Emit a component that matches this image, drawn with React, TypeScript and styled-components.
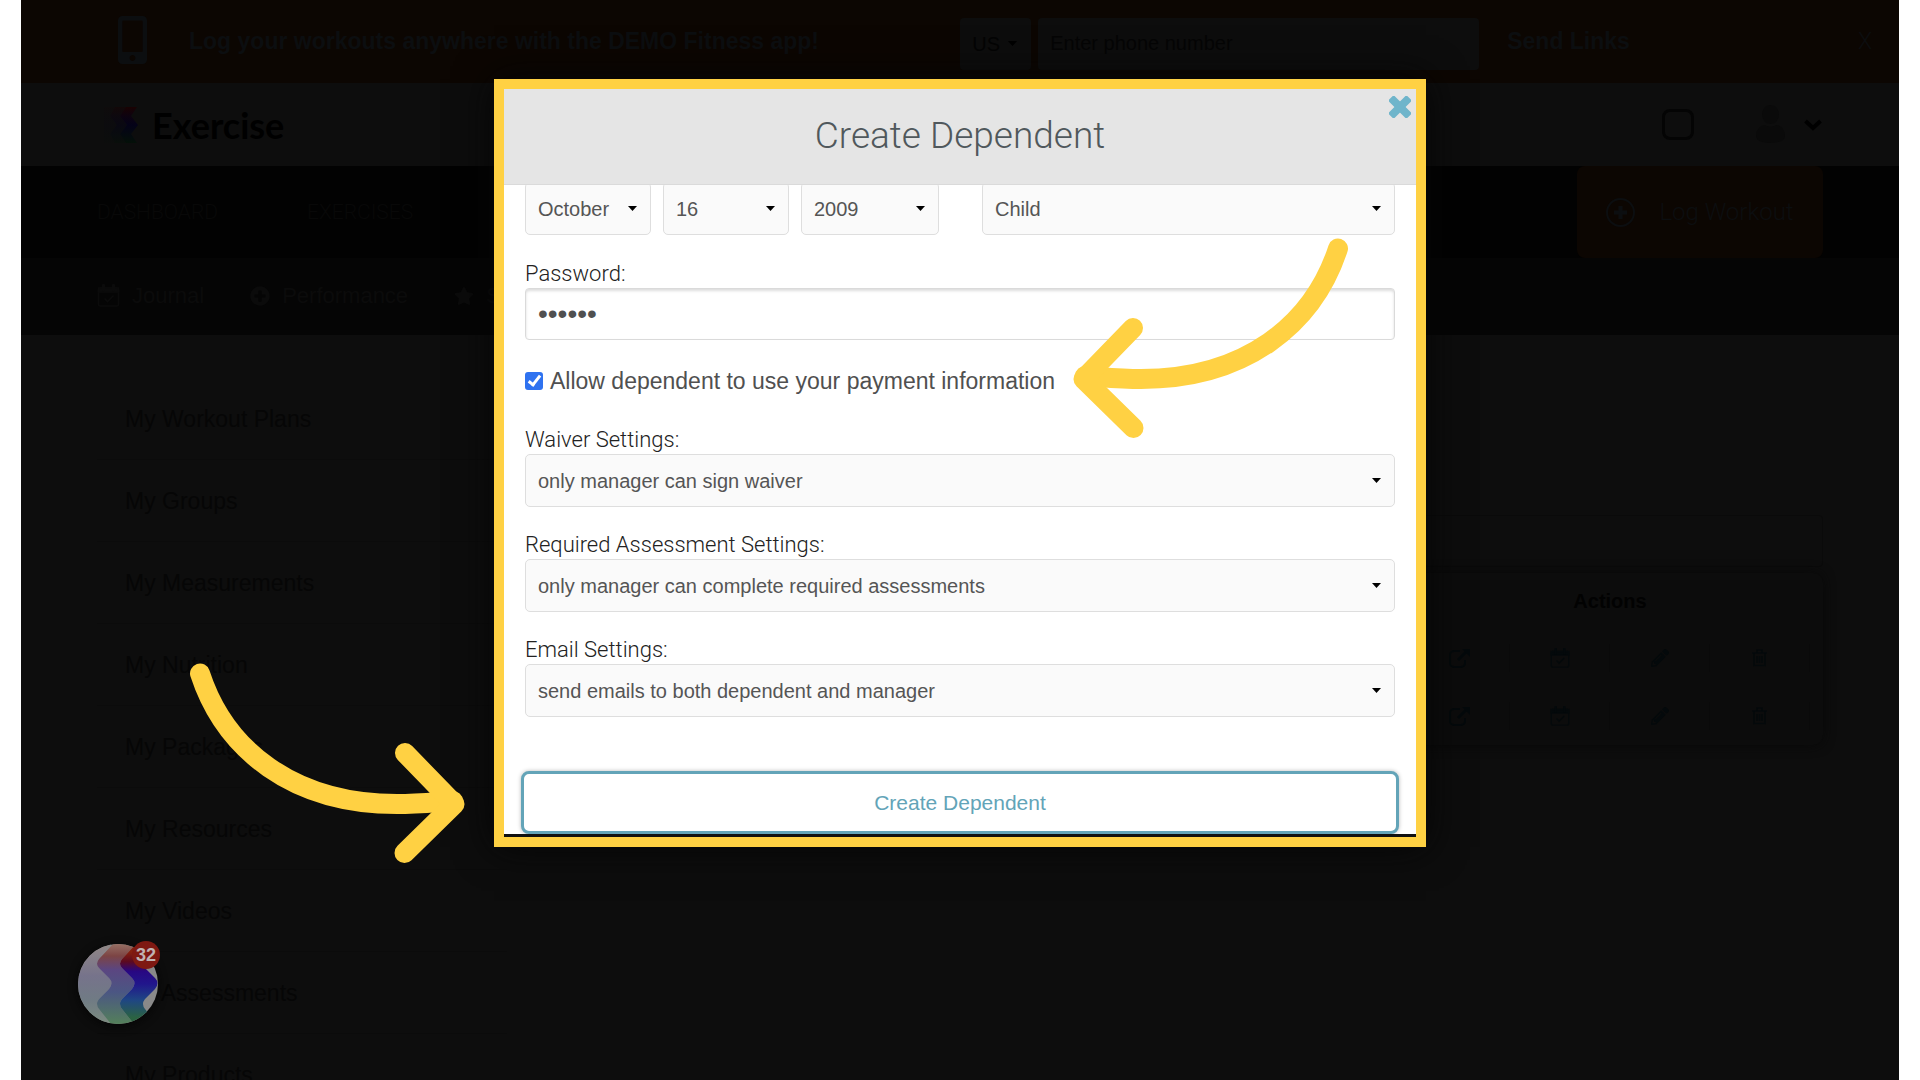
import React, { useId } from "react";
import styled, { createGlobalStyle } from "styled-components";
import { FaMobileAlt, FaPlusCircle, FaStar, FaPencilAlt } from "react-icons/fa";

const sans = `"Liberation Sans", Arial, sans-serif`;
const light = `Roboto, "Liberation Sans", sans-serif`;

const GlobalStyle = createGlobalStyle`
  *, *::before, *::after { box-sizing: border-box; }
  body { margin: 0; background: #fff; font-family: ${sans}; }
  button, input, select { font: inherit; color: inherit; margin: 0; }
  a { color: inherit; text-decoration: none; }
`;

const Frame = styled.div`
  position: relative;
  margin: 0 21px;
  height: 100vh;
  overflow: hidden;
  background: #0d0d0d;
  color: #050505;
`;

/* ---------- page behind the dialog ---------- */

const Promo = styled.div`
  display: flex;
  align-items: center;
  height: 83px;
  padding: 0 27px 0 97px;
  background: #0c0602;
  color: #0c0e10;
`;
const PromoIcon = styled.span`
  display: flex;
  width: 71px;
  padding-bottom: 4px;
  font-size: 48px;
  svg { width: 29px; }
`;
const PromoText = styled.strong`
  flex: 1;
  font-size: 23px;
`;
const PromoForm = styled.form`
  display: flex;
  gap: 7px;
  margin-right: 28px;
  padding-top: 4px;
`;
const CountryBox = styled.span`
  position: relative;
  display: block;
  width: 71px;
`;
const CountrySelect = styled.select`
  appearance: none;
  width: 100%;
  height: 52px;
  padding: 0 12px;
  border: 0;
  border-radius: 4px;
  background: #0d0d0d;
  color: #040404;
  font-size: 20px;
`;
const PhoneInput = styled.input`
  width: 441px;
  height: 52px;
  padding: 0 12px;
  border: 0;
  border-radius: 4px;
  background: #0d0d0d;
  font-size: 20px;
  &::placeholder { color: #050505; opacity: 1; }
`;
const PlainButton = styled.button<{ $bold?: boolean }>`
  padding: 0;
  border: 0;
  background: none;
  color: inherit;
  font-size: 23px;
  font-weight: ${(p) => (p.$bold ? 700 : 400)};
`;
const PromoClose = styled(PlainButton)`
  margin-left: 228px;
  font-family: ${light};
  font-weight: 300;
`;

const Masthead = styled.header`
  display: flex;
  align-items: center;
  justify-content: space-between;
  height: 83px;
  padding: 0 77px 0 81px;
`;
const Brand = styled.a`
  display: flex;
  align-items: center;
  gap: 14px;
  color: #000;
  font: 700 36px/40px Lato, ${sans};
`;
const AccountArea = styled.div`
  display: flex;
  align-items: center;
`;
const SquareButton = styled.button`
  width: 32px;
  height: 31px;
  padding: 0;
  border: 3px solid #040404;
  border-radius: 8px;
  background: none;
`;
const AccountButton = styled.button`
  display: flex;
  align-items: center;
  gap: 18px;
  margin-left: 61px;
  padding: 0;
  border: 0;
  background: none;
`;

const MainNav = styled.nav`
  display: flex;
  align-items: center;
  height: 92px;
  padding: 0 76px;
  background: #020202;
  color: #080808;
  font: 300 21px/28px ${light};
`;
const MainLink = styled.a`
  width: 210px;
`;
const LogWorkout = styled.button`
  display: flex;
  align-items: center;
  justify-content: center;
  gap: 24px;
  width: 246px;
  height: 92px;
  margin-left: auto;
  border: 0;
  border-radius: 8px;
  background: #0c0602;
  color: #0c0e10;
  font-size: 24px;
  font-weight: 300;
`;
const SubNav = styled.nav`
  display: flex;
  align-items: center;
  gap: 46px;
  height: 77px;
  padding: 0 76px 2px;
  background: #050505;
  color: #0b0b0b;
  font-size: 22px;
`;
const SubLink = styled.a`
  display: flex;
  align-items: center;
  gap: 12px;
`;

const Content = styled.div`
  display: flex;
  gap: 30px;
  padding: 43px 76px 0;
`;
const SideMenu = styled.ul`
  flex: 0 0 410px;
  margin: 0;
  padding: 0;
  list-style: none;
`;
const SideItem = styled.li`
  height: 82px;
  padding-left: 28px;
  border-bottom: 1px solid #0b0b0b;
  color: #060606;
  font-size: 23px;
  line-height: 82px;
`;
const Main = styled.main`
  flex: 1;
  padding-top: 137px;
`;
const SearchInput = styled.input`
  display: block;
  width: 100%;
  height: 52px;
  margin-bottom: 6px;
  border: 1px solid #0a0a0a;
  border-radius: 4px;
  background: #0d0d0d;
`;
const GridCard = styled.div`
  padding-right: 13px;
  border-radius: 10px;
  background: #0c0c0c;
  box-shadow: 0 0 12px #080808;
`;
const Grid = styled.table`
  width: 100%;
  border-collapse: collapse;
  th { height: 56px; color: #020202; font-size: 20px; }
  td { height: 58px; padding: 0; }
`;
const ActionCell = styled.td`
  width: 100px;
`;
const ActionButton = styled.button`
  display: flex;
  align-items: center;
  justify-content: center;
  width: 100%;
  height: 28px;
  padding: 0;
  border: 0;
  border-right: 1px solid #0a0a0a;
  background: none;
  color: #04090b;
  font-size: 18px;
`;

/* ---------- dialog ---------- */

const Overlay = styled.div`
  position: absolute;
  inset: 0;
  display: flex;
  align-items: flex-start;
  justify-content: center;
  padding-top: 79px;
`;
const Dialog = styled.section`
  position: relative;
  width: 932px;
  border: 10px solid #ffd143;
  background: #fff;
  color: #505050;
  box-shadow: 0 0 36px #050505;
`;
const DialogHeader = styled.header`
  display: flex;
  align-items: center;
  justify-content: center;
  height: 96px;
  padding-bottom: 2px;
  border-bottom: 1px solid #dadada;
  background: #e5e5e5;
`;
const DialogTitle = styled.h2`
  margin: 0;
  color: #50585c;
  font: 300 37px/48px ${light};
`;
const CloseButton = styled.button`
  position: absolute;
  top: 7px;
  right: 5px;
  display: flex;
  padding: 0;
  border: 0;
  background: none;
  color: #6fb5cb;
`;
const Scroller = styled.div`
  overflow: hidden;
  padding: 0 21px;
  border-bottom: 3px solid #111;
`;
const Form = styled.form`
  display: flex;
  flex-direction: column;
  gap: 24px;
  margin-top: -3px;
`;
const DateRow = styled.div`
  display: grid;
  grid-template-columns: 126px 126px 138px 1fr;
  column-gap: 12px;
  margin-bottom: 1px;
  & > :last-child { margin-left: 31px; }
`;
const Field = styled.div`
  display: flex;
  flex-direction: column;
`;
const Label = styled.label`
  color: #222;
  font: 300 22px/28px ${light};
`;
const SelectBox = styled.span`
  position: relative;
  display: block;
`;
const Select = styled.select`
  appearance: none;
  display: block;
  width: 100%;
  height: 53px;
  padding: 1px 30px 0 12px;
  border: 1px solid #dedede;
  border-radius: 5px;
  background: #fafafa;
  color: #555;
  font-size: 20px;
`;
const Caret = styled.svg<{ $right: number }>`
  position: absolute;
  top: 50%;
  right: ${(p) => p.$right}px;
  margin-top: -3px;
  pointer-events: none;
`;
const PasswordInput = styled.input`
  height: 52px;
  padding: 0 12px;
  border: 1px solid #dadada;
  border-radius: 4px;
  background: #fff;
  box-shadow: inset 0 2px 3px #ddd;
  color: #505050;
  font: 28px ${sans};
`;
const CheckRow = styled.div`
  display: flex;
  align-items: center;
  gap: 7px;
  padding: 3px 0 7px;
  font-size: 23px;
  line-height: 28px;
`;
const Tick = styled.input`
  appearance: none;
  width: 18px;
  height: 18px;
  border-radius: 3px;
  background: #2f72f0;
  display: grid;
  place-items: center;
  &:checked::after {
    content: "";
    width: 7px;
    height: 13px;
    margin-bottom: 3px;
    border: solid #fff;
    border-width: 0 3px 3px 0;
    transform: rotate(38deg);
  }
`;
const Submit = styled.button`
  height: 63px;
  margin: 30px -4px 0;
  border: 3px solid #63a4b8;
  border-radius: 8px;
  background: #fff;
  box-shadow: 0 0 4px #bbb;
  color: #63a4b8;
  font-size: 21px;
`;

const ArrowSvg = styled.svg<{ $left: number; $top: number }>`
  position: absolute;
  left: ${(p) => p.$left}px;
  top: ${(p) => p.$top}px;
  pointer-events: none;
`;

const ChatButton = styled.button`
  position: absolute;
  left: 57px;
  bottom: 56px;
  width: 80px;
  height: 80px;
  padding: 0;
  border: 0;
  border-radius: 50%;
  background: none;
  box-shadow: 0 2px 10px #050505;
  svg { display: block; }
`;
const Badge = styled.span`
  position: absolute;
  top: -3px;
  right: -2px;
  width: 28px;
  height: 28px;
  border-radius: 50%;
  background: #7e1912;
  color: #c0b4b3;
  font-size: 18px;
  font-weight: 700;
  line-height: 28px;
  text-align: center;
`;

/* ---------- drawings ---------- */

function CalendarIcon({ size }: { size: number }) {
  return (
    <svg width={size} height={size} viewBox="0 0 22 23" fill="none" stroke="currentColor" strokeWidth="1.6">
      <rect x="1" y="4" width="20" height="18" rx="1.5" />
      <path d="M1 4h20v4H1z" fill="currentColor" />
      <path d="M6 1v5M16 1v5" strokeWidth="3" strokeLinecap="round" />
      <path d="M7 14.5l3 3 6-6" />
    </svg>
  );
}

function ExternalIcon() {
  return (
    <svg width="21" height="19" viewBox="0 0 21 19" fill="none" stroke="currentColor" strokeWidth="2">
      <path d="M11 2H5a4 4 0 0 0-4 4v8a4 4 0 0 0 4 4h7a4 4 0 0 0 4-4v-3" />
      <path d="M9 11l9-9" strokeWidth="3" />
      <path d="M13 0h8v8z" fill="currentColor" stroke="none" />
    </svg>
  );
}

function TrashIcon() {
  return (
    <svg width="15" height="18" viewBox="0 0 15 18" fill="none" stroke="currentColor" strokeWidth="1.4">
      <path d="M0 4h15M2 4v12.500h11V4M5 4V1h5v3M5 7v7M7.500 7v7M10 7v7" />
    </svg>
  );
}

function BrandMark() {
  const id = useId();
  return (
    <svg width="36" height="36" viewBox="0 0 36 36" aria-hidden="true">
      <defs>
        <linearGradient id={id} x1="0" y1="0" x2="0" y2="1">
          <stop offset="0" stopColor="#1a0202" />
          <stop offset="0.25" stopColor="#0d0310" />
          <stop offset="0.5" stopColor="#040218" />
          <stop offset="1" stopColor="#041008" />
        </linearGradient>
      </defs>
      <path d="M24 0h11l-6 9 7 9-7 9 6 9H24l-6-9 7-9-7-9z" fill={`url(#${id})`} />
      <path d="M13 0h11l-6 9 7 9-7 9 6 9H13l-5-9 7-9-7-9z" fill={`url(#${id})`} opacity="0.45" />
      <path d="M2 0h11L8 9l7 9-7 9 5 9H2z" fill={`url(#${id})`} opacity="0.12" />
    </svg>
  );
}

function ChatMark() {
  const id = useId();
  return (
    <svg width="80" height="80" viewBox="0 0 80 80" aria-hidden="true">
      <defs>
        <clipPath id={`${id}c`}>
          <circle cx="40" cy="40" r="40" />
        </clipPath>
        <linearGradient id={`${id}1`} x1="0" y1="0" x2="0" y2="1">
          <stop offset="0" stopColor="#918786" />
          <stop offset="0.4" stopColor="#76738b" />
          <stop offset="0.7" stopColor="#707b84" />
          <stop offset="1" stopColor="#7c8c80" />
        </linearGradient>
        <linearGradient id={`${id}2`} x1="0" y1="0" x2="0" y2="1">
          <stop offset="0" stopColor="#966e63" />
          <stop offset="0.15" stopColor="#7c4444" />
          <stop offset="0.32" stopColor="#5b4681" />
          <stop offset="0.6" stopColor="#4b5683" />
          <stop offset="1" stopColor="#54805a" />
        </linearGradient>
        <linearGradient id={`${id}3`} x1="0" y1="0" x2="0" y2="1">
          <stop offset="0.1" stopColor="#86200f" />
          <stop offset="0.22" stopColor="#5c0a20" />
          <stop offset="0.34" stopColor="#280782" />
          <stop offset="0.5" stopColor="#21168c" />
          <stop offset="0.7" stopColor="#1f4684" />
          <stop offset="0.92" stopColor="#2b6342" />
        </linearGradient>
      </defs>
      <g clipPath={`url(#${id}c)`}>
        <path d="M0 0h80v80H0z" fill="#898989" />
        <path d="M0 0h33L21 15Q17 20 21 24L31 34Q36 39 31 45L21 55Q17 60 21 65L33 80H0z" fill={`url(#${id}1)`} />
        <path d="M35 0h23L44 15Q40 20 44 24L54 34Q59 39 54 45L44 55Q40 60 44 65L56 80H33L21 65Q17 60 21 55L31 45Q36 39 31 34L21 24Q17 20 21 15z" fill={`url(#${id}2)`} />
        <path d="M58 0h23L67 15Q63 20 67 24L77 34Q82 39 77 45L67 55Q63 60 67 65L79 80H56L44 65Q40 60 44 55L54 45Q59 39 54 34L44 24Q40 20 44 15z" fill={`url(#${id}3)`} />
      </g>
    </svg>
  );
}

function Arrow({ left, top, flip }: { left: number; top: number; flip?: boolean }) {
  return (
    <ArrowSvg $left={left} $top={top} width="276" height="202" viewBox="0 0 276 202" aria-hidden="true">
      <g
        fill="none"
        stroke="#ffd143"
        strokeWidth="20"
        strokeLinecap="round"
        strokeLinejoin="round"
        transform={flip ? "translate(276 0) scale(-1 1)" : undefined}
      >
        <path d="M265 10.500C240 87 172 141 68 141C48 141 28 139 12 138" />
        <path d="M60 90L10.500 141L60.500 190" />
      </g>
    </ArrowSvg>
  );
}

function SelectField({ id, value, aria }: { id: string; value: string; aria?: string }) {
  return (
    <SelectBox>
      <Select id={id} aria-label={aria} defaultValue={value}>
        <option>{value}</option>
      </Select>
      <Caret $right={14} width="9" height="5" viewBox="0 0 9 5">
        <path d="M0 0h9L4.500 5z" fill="#000" />
      </Caret>
    </SelectBox>
  );
}

const sideItems = [
  "My Workout Plans",
  "My Groups",
  "My Measurements",
  "My Nutrition",
  "My Packages",
  "My Resources",
  "My Videos",
  "My Assessments",
  "My Products",
];

const settings = [
  { id: "waiver", label: "Waiver Settings:", value: "only manager can sign waiver" },
  { id: "assessment", label: "Required Assessment Settings:", value: "only manager can complete required assessments" },
  { id: "email", label: "Email Settings:", value: "send emails to both dependent and manager" },
];

export default function App() {
  return (
    <>
      <GlobalStyle />
      <Frame>
        <Promo>
          <PromoIcon>
            <FaMobileAlt preserveAspectRatio="none" />
          </PromoIcon>
          <PromoText>Log your workouts anywhere with the DEMO Fitness app!</PromoText>
          <PromoForm>
            <CountryBox>
              <CountrySelect aria-label="Country" defaultValue="US">
                <option>US</option>
              </CountrySelect>
              <Caret $right={14} width="9" height="5" viewBox="0 0 9 5">
                <path d="M0 0h9L4.500 5z" fill="#000" />
              </Caret>
            </CountryBox>
            <PhoneInput type="tel" aria-label="Phone number" placeholder="Enter phone number" />
          </PromoForm>
          <PlainButton type="button" $bold>Send Links</PlainButton>
          <PromoClose type="button">X</PromoClose>
        </Promo>

        <Masthead>
          <Brand href="#">
            <BrandMark />
            Exercise
          </Brand>
          <AccountArea>
            <SquareButton type="button" aria-label="Apps" />
            <AccountButton type="button" aria-label="Account">
              <svg width="31" height="39" viewBox="0 0 31 39" fill="#0a0a0a">
                <ellipse cx="15.500" cy="9.500" rx="8.500" ry="9.500" />
                <path d="M1 31c0-7 5-11 9-11 3 2 8 2 11 0 4 0 9 4 9 11 0 4-5 7-14.500 7S1 35 1 31z" />
              </svg>
              <svg width="18" height="12" viewBox="0 0 18 12" fill="none" stroke="#000" strokeWidth="4">
                <path d="M1.500 2L9 9l7.500-7" />
              </svg>
            </AccountButton>
          </AccountArea>
        </Masthead>

        <MainNav>
          <MainLink href="#">DASHBOARD</MainLink>
          <MainLink href="#">EXERCISES</MainLink>
          <LogWorkout type="button">
            <svg width="29" height="29" viewBox="0 0 29 29" fill="none" stroke="currentColor">
              <circle cx="14.500" cy="14.500" r="13.500" strokeWidth="2" />
              <path d="M14.500 8v13M8 14.500h13" strokeWidth="4" />
            </svg>
            Log Workout
          </LogWorkout>
        </MainNav>

        <SubNav>
          <SubLink href="#"><CalendarIcon size={23} />Journal</SubLink>
          <SubLink href="#"><FaPlusCircle size={20} />Performance</SubLink>
          <SubLink href="#"><FaStar size={20} />S</SubLink>
        </SubNav>

        <Content>
          <SideMenu>
            {sideItems.map((item) => (
              <SideItem key={item}>
                <a href="#">{item}</a>
              </SideItem>
            ))}
          </SideMenu>
          <Main>
            <SearchInput type="search" aria-label="Search dependents" />
            <GridCard>
              <Grid>
                <thead>
                  <tr>
                    <th />
                    <th colSpan={4}>Actions</th>
                  </tr>
                </thead>
                <tbody>
                  {[1, 2].map((row) => (
                    <tr key={row}>
                      <td />
                      <ActionCell><ActionButton type="button" aria-label="Open"><ExternalIcon /></ActionButton></ActionCell>
                      <ActionCell><ActionButton type="button" aria-label="Schedule"><CalendarIcon size={20} /></ActionButton></ActionCell>
                      <ActionCell><ActionButton type="button" aria-label="Edit"><FaPencilAlt /></ActionButton></ActionCell>
                      <ActionCell><ActionButton type="button" aria-label="Delete"><TrashIcon /></ActionButton></ActionCell>
                    </tr>
                  ))}
                </tbody>
              </Grid>
            </GridCard>
          </Main>
        </Content>

        <ChatButton type="button" aria-label="Open chat, 32 unread">
          <ChatMark />
          <Badge>32</Badge>
        </ChatButton>

        <Overlay>
          <Dialog role="dialog" aria-labelledby="dialog-title">
            <DialogHeader>
              <DialogTitle id="dialog-title">Create Dependent</DialogTitle>
              <CloseButton type="button" aria-label="Close">
                <svg width="22" height="22" viewBox="0 0 22 22" fill="currentColor">
                  <rect x="-2" y="7" width="26" height="8" rx="2" transform="rotate(45 11 11)" />
                  <rect x="-2" y="7" width="26" height="8" rx="2" transform="rotate(-45 11 11)" />
                </svg>
              </CloseButton>
            </DialogHeader>
            <Scroller>
              <Form onSubmit={(e) => e.preventDefault()}>
                <DateRow>
                  <SelectField id="month" aria="Month" value="October" />
                  <SelectField id="day" aria="Day" value="16" />
                  <SelectField id="year" aria="Year" value="2009" />
                  <SelectField id="relation" aria="Relation" value="Child" />
                </DateRow>
                <Field>
                  <Label htmlFor="password">Password:</Label>
                  <PasswordInput id="password" type="password" defaultValue="secret" />
                </Field>
                <CheckRow>
                  <Tick id="payment" type="checkbox" defaultChecked />
                  <label htmlFor="payment">Allow dependent to use your payment information</label>
                </CheckRow>
                {settings.map((s) => (
                  <Field key={s.id}>
                    <Label htmlFor={s.id}>{s.label}</Label>
                    <SelectField id={s.id} value={s.value} />
                  </Field>
                ))}
                <Submit type="submit">Create Dependent</Submit>
              </Form>
            </Scroller>
            <Arrow left={569} top={149} />
            <Arrow left={-315} top={574} flip />
          </Dialog>
        </Overlay>
      </Frame>
    </>
  );
}
